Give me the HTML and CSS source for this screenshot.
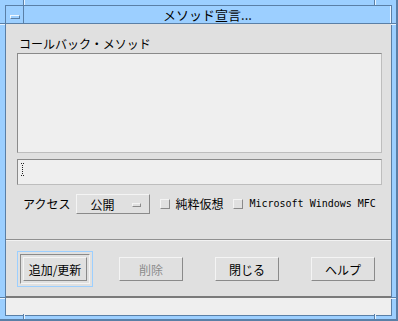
FILE: index.html
```html
<!DOCTYPE html>
<html lang="ja">
<head>
    <meta charset="UTF-8">
    <title>メソッド宣言...</title>
    <link rel="stylesheet" href="styles.css">
</head>
<body>
    <div class="window">
        <!-- resize handle marks on the frame -->
        <span class="tick tick-v" style="left: 23px; top: 0;"></span>
        <span class="tick tick-v" style="left: 374px; top: 0;"></span>
        <span class="tick tick-v" style="left: 23px; bottom: 0;"></span>
        <span class="tick tick-v" style="left: 374px; bottom: 0;"></span>
        <span class="tick tick-h" style="top: 23px; left: 0;"></span>
        <span class="tick tick-h" style="top: 23px; right: 0;"></span>
        <span class="tick tick-h" style="top: 297px; left: 0;"></span>
        <span class="tick tick-h" style="top: 297px; right: 0;"></span>

        <div class="frame">
            <!-- title bar -->
            <div class="titlebar">
                <div class="menu-btn"><span class="menu-glyph"></span></div>
                <div class="title">メソッド宣言...</div>
            </div>

            <div class="dialog">
                <div class="main">
                    <div class="label">コールバック・メソッド</div>
                    <div class="listbox"></div>
                    <div class="textfield">
                        <svg class="ibeam" width="5" height="13" viewBox="0 0 5 13">
                            <path d="M1 0.5h1M3 0.5h1M2.5 2v1M2.5 4v1M2.5 6v1M2.5 8v1M2.5 10v1M1 12.5h1M3 12.5h1" stroke="#222" stroke-width="1" fill="none"/>
                        </svg>
                    </div>
                    <div class="access-row">
                        <span class="access-label">アクセス</span>
                        <div class="option-btn">
                            <span class="option-text">公開</span>
                            <span class="option-mark"></span>
                        </div>
                        <span class="checkbox"></span>
                        <span class="check-label">純粋仮想</span>
                        <span class="checkbox"></span>
                        <span class="check-label mono">Microsoft Windows MFC</span>
                    </div>
                </div>

                <div class="separator"></div>

                <div class="actions">
                    <div class="slot default">
                        <div class="slot-inner">
                            <button class="btn">追加/更新</button>
                        </div>
                    </div>
                    <div class="slot">
                        <div class="slot-inner">
                            <button class="btn disabled">削除</button>
                        </div>
                    </div>
                    <div class="slot">
                        <div class="slot-inner">
                            <button class="btn">閉じる</button>
                        </div>
                    </div>
                    <div class="slot">
                        <div class="slot-inner">
                            <button class="btn">ヘルプ</button>
                        </div>
                    </div>
                </div>
            </div>

            <div class="footer"></div>
        </div>
    </div>
</body>
</html>
```

FILE: styles.css
```css
body {
    margin: 0;
    background-color: #e0e0e0;
    font-family: "Noto Sans CJK JP", "DejaVu Sans", sans-serif;
    font-size: 12px;
    color: #000;
}

/* window frame */
.window {
    position: relative;
    box-sizing: border-box;
    width: 398px;
    height: 321px;
    background-color: #9ccfff;
    border-right: 2px solid #5a7fa6;
    border-bottom: 2px solid #5a7fa6;
    padding: 5px 4px 3px 5px;
}

.tick {
    position: absolute;
    background-color: #5a7fa6;
}

.tick-v {
    width: 1px;
    height: 5px;
    box-shadow: 1px 0 0 #e8f4ff;
}

.tick-h {
    width: 5px;
    height: 1px;
    box-shadow: 0 1px 0 #e8f4ff;
}

.frame {
    box-sizing: border-box;
    height: 311px;
    border: 1px solid #5a7fa6;
    display: flex;
    flex-direction: column;
}

/* title bar */
.titlebar {
    display: flex;
    height: 17px;
    border-bottom: 1px solid #5a7fa6;
    background-color: #9ccfff;
}

.menu-btn {
    width: 17px;
    border-right: 1px solid #5a7fa6;
    display: flex;
    align-items: center;
    justify-content: center;
}

.menu-glyph {
    box-sizing: border-box;
    width: 10px;
    height: 4px;
    margin-top: 4px;
    border: 1px solid #5a7fa6;
    border-top-color: #f0f8ff;
    border-left-color: #f0f8ff;
    background-color: #9ccfff;
}

.title {
    flex: 1;
    text-align: center;
    line-height: 17px;
    font-size: 13px;
    box-shadow: inset -1px 0 0 #e8f4ff;
}

/* dialog body */
.dialog {
    flex: 1;
    display: flex;
    flex-direction: column;
    background-color: #e0e0e0;
    border-bottom: 2px solid #7a7a7a;
}

.main {
    padding: 13px 9px 0 11px;
}

.label {
    height: 14px;
    line-height: 14px;
    margin-bottom: 2px;
    padding-left: 2px;
}

.listbox,
.textfield {
    box-sizing: border-box;
    background-color: #efefef;
    border: 1px solid #bdbdbd;
    border-top-color: #8a8a8a;
    border-left-color: #8a8a8a;
}

.listbox {
    height: 100px;
}

.textfield {
    height: 26px;
    margin-top: 6px;
    padding: 3px 0 0 2px;
}

.ibeam {
    display: block;
}

.access-row {
    display: flex;
    align-items: center;
    height: 20px;
    margin-top: 9px;
    padding-left: 6px;
    white-space: nowrap;
}

.access-row > * {
    flex-shrink: 0;
}

.access-label {
    margin-right: 6px;
    line-height: 14px;
}

.option-btn {
    box-sizing: border-box;
    width: 74px;
    height: 20px;
    display: flex;
    align-items: center;
    border: 1px solid #8a8a8a;
    border-top-color: #f4f4f4;
    border-left-color: #f4f4f4;
    margin-right: 10px;
}

.option-text {
    margin-left: 13px;
    width: 42px;
}

.option-mark {
    box-sizing: border-box;
    width: 9px;
    height: 4px;
    margin-top: 1px;
    border: 1px solid #8a8a8a;
    border-top-color: #f4f4f4;
    border-left-color: #f4f4f4;
}

.checkbox {
    box-sizing: border-box;
    width: 10px;
    height: 10px;
    border: 1px solid #8a8a8a;
    border-top-color: #f4f4f4;
    border-left-color: #f4f4f4;
    margin-right: 5px;
}

.check-label {
    margin-right: 10px;
    line-height: 14px;
}

.mono {
    margin-left: 1px;
    margin-right: 0;
    font-family: "DejaVu Sans Mono", "Liberation Mono", monospace;
    font-size: 10px;
}

.separator {
    margin-top: 25px;
    height: 1px;
    background-color: #909090;
    border-bottom: 1px solid #f2f2f2;
}

/* buttons */
.actions {
    display: flex;
    gap: 20px;
    padding: 10px 0 0 11px;
}

.slot {
    box-sizing: border-box;
    width: 76px;
    height: 36px;
    padding: 2px;
    border: 1px solid transparent;
}

.slot-inner {
    box-sizing: border-box;
    height: 100%;
    padding: 2px;
    border: 1px solid transparent;
}

.slot.default {
    border-color: #9ccfff;
}

.slot.default .slot-inner {
    border-color: #8a8a8a;
    border-right-color: #f4f4f4;
    border-bottom-color: #f4f4f4;
}

.btn {
    box-sizing: border-box;
    display: block;
    width: 64px;
    height: 24px;
    margin: 0;
    padding: 0;
    background-color: #e0e0e0;
    border: 1px solid #8a8a8a;
    border-top-color: #f4f4f4;
    border-left-color: #f4f4f4;
    font-family: "Noto Sans CJK JP", "DejaVu Sans", sans-serif;
    font-size: 12px;
    color: #000;
}

.btn.disabled {
    color: #8c8c8c;
}

.footer {
    height: 17px;
    background-color: #efefef;
}
```
